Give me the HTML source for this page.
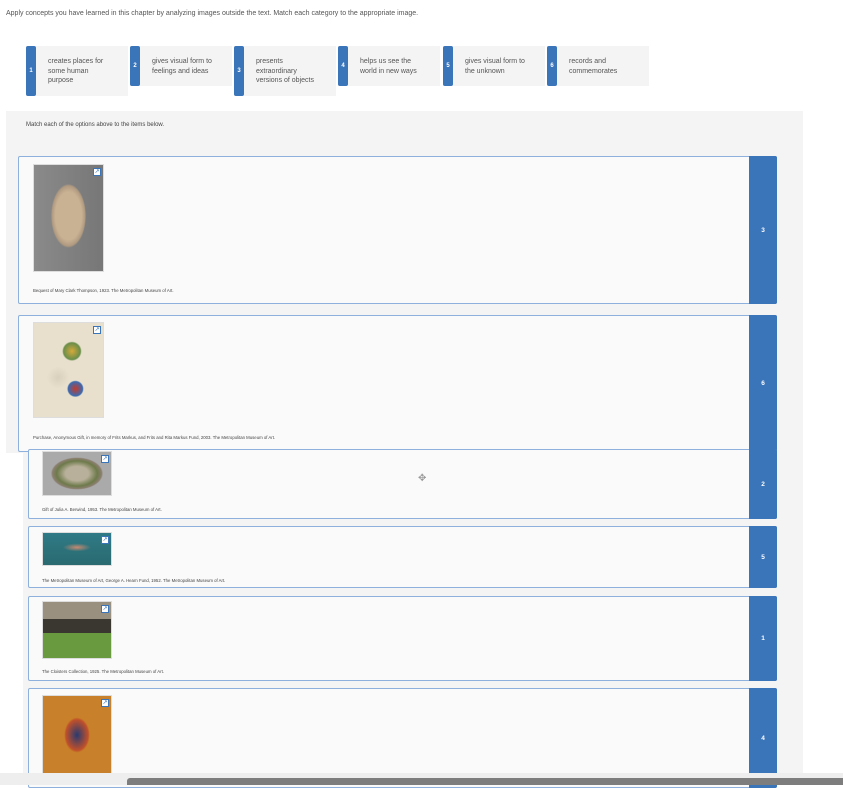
<!DOCTYPE html>
<html><head><style>
*{margin:0;padding:0;box-sizing:border-box}
body{width:843px;height:785px;overflow:hidden;background:#fff;font-family:"Liberation Sans",sans-serif;position:relative;color:#444}
.a{position:absolute}
.intro{left:6px;top:10px;font-size:7px;color:#555}
.chip{position:absolute;top:46px;width:102px;background:#f4f4f4}
.chip .bar{position:absolute;left:0;top:0;bottom:0;width:10px;background:#3a74b9;border-radius:2px;color:#fff;font-size:6px;font-weight:bold;display:flex;align-items:center;justify-content:center}
.chip .t{padding:11px 12px 6px 22px;font-size:7px;line-height:9.5px;color:#555}
.panel{background:#f4f4f4}
.card{position:absolute;background:#fafafa;border:1px solid #8db0dd;border-radius:2px}
.num{position:absolute;right:-1px;top:-1px;bottom:-1px;width:28px;background:#3a74b9;color:#fff;font-size:6.5px;font-weight:bold;display:flex;align-items:center;justify-content:center;border-radius:0 2px 2px 0}
.img{position:absolute;border:1px solid #ddd}
.ic{position:absolute;right:2px;top:3px;width:8px;height:8px;background:#fff;border:1px solid #3a74b9;color:#3a74b9;font-size:6px;line-height:6px;text-align:center}
.cap{position:absolute;font-size:4.3px;color:#444;white-space:nowrap}
</style></head><body>
<div class="a intro">Apply concepts you have learned in this chapter by analyzing images outside the text. Match each category to the appropriate image.</div>

<div class="chip" style="left:26px;height:50px"><div class="bar">1</div><div class="t">creates places for<br>some human<br>purpose</div></div>
<div class="chip" style="left:130px;height:40px"><div class="bar">2</div><div class="t">gives visual form to<br>feelings and ideas</div></div>
<div class="chip" style="left:234px;height:50px"><div class="bar">3</div><div class="t">presents<br>extraordinary<br>versions of objects</div></div>
<div class="chip" style="left:338px;height:40px"><div class="bar">4</div><div class="t">helps us see the<br>world in new ways</div></div>
<div class="chip" style="left:443px;height:40px"><div class="bar">5</div><div class="t">gives visual form to<br>the unknown</div></div>
<div class="chip" style="left:547px;height:40px"><div class="bar">6</div><div class="t">records and<br>commemorates</div></div>

<div class="a panel" style="left:6px;top:111px;width:797px;height:342px"></div>
<div class="a panel" style="left:23px;top:453px;width:780px;height:320px"></div>
<div class="a" style="left:26px;top:122px;font-size:6px;color:#444">Match each of the options above to the items below.</div>

<div class="card" style="left:18px;top:156px;width:759px;height:148px"><div class="num">3</div></div>
<div class="img" style="left:33px;top:164px;width:71px;height:108px;background:radial-gradient(ellipse 22px 40px at 50% 48%,#c9b193 60%,#b09a80 75%,transparent 80%),linear-gradient(90deg,#8a8a8a,#777)"><div class="ic">↗</div></div>
<div class="cap" style="left:33px;top:288px">Bequest of Mary Clark Thompson, 1923. The Metropolitan Museum of Art.</div>

<div class="card" style="left:18px;top:315px;width:759px;height:137px"><div class="num">6</div></div>
<div class="img" style="left:33px;top:322px;width:71px;height:96px;background:radial-gradient(circle 14px at 55% 30%,#d6a93a,#6a8e4a 60%,transparent 70%),radial-gradient(circle 12px at 60% 70%,#c43a2a,#3b6ab0 60%,transparent 70%),radial-gradient(circle 14px at 35% 58%,#d8d0bc,transparent 80%),#e8e0cc"><div class="ic">↗</div></div>
<div class="cap" style="left:33px;top:435px">Purchase, Anonymous Gift, in memory of Frits Markus, and Frits and Rita Markus Fund, 2003. The Metropolitan Museum of Art.</div>

<div class="card" style="left:28px;top:449px;width:749px;height:70px"><div class="num">2</div></div>
<div class="img" style="left:42px;top:451px;width:70px;height:45px;background:radial-gradient(ellipse 29px 18px at 50% 50%,#b8b09a 40%,#6d7a4a 70%,#8c8070 85%,#aaa 90%)"><div class="ic">↗</div></div>
<div class="a" style="left:418px;top:473px;font-size:10px;color:#999">✥</div>
<div class="cap" style="left:42px;top:507px">Gift of Julia A. Berwind, 1953. The Metropolitan Museum of Art.</div>

<div class="card" style="left:28px;top:526px;width:749px;height:62px"><div class="num">5</div></div>
<div class="img" style="left:42px;top:532px;width:70px;height:34px;background:radial-gradient(ellipse 14px 4px at 50% 45%,#c88a70,transparent),linear-gradient(#2f7a86,#2a6a70)"><div class="ic">↗</div></div>
<div class="cap" style="left:42px;top:578px">The Metropolitan Museum of Art, George A. Hearn Fund, 1952. The Metropolitan Museum of Art.</div>

<div class="card" style="left:28px;top:596px;width:749px;height:85px"><div class="num">1</div></div>
<div class="img" style="left:42px;top:601px;width:70px;height:58px;background:linear-gradient(#9a9080 0 30%,#3a3630 30% 55%,#6a9a40 55%)"><div class="ic">↗</div></div>
<div class="cap" style="left:42px;top:669px">The Cloisters Collection, 1925. The Metropolitan Museum of Art.</div>

<div class="card" style="left:28px;top:688px;width:749px;height:100px"><div class="num">4</div></div>
<div class="img" style="left:42px;top:695px;width:70px;height:80px;background:radial-gradient(ellipse 16px 22px at 50% 50%,#2a3a70,#c0502a 70%,transparent 80%),#c8802a"><div class="ic">↗</div></div>

<div class="a" style="left:0;top:773px;width:843px;height:12px;background:#eee"></div>
<div class="a" style="left:127px;top:778px;width:716px;height:7px;background:#7d7d7d;border-radius:3px 0 0 0"></div>
</body></html>
